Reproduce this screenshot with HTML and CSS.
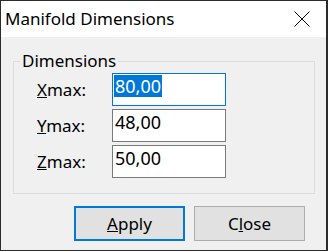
FILE: index.html
```html
<html lang="en">
<head>
    <link rel="stylesheet" href="styles.css">
</head>
<body>
    <div class='dialog'>
        <div class='titlebar'>
            <span class='title'>Manifold Dimensions</span>
            <svg class='close-x' width="16" height="16" viewBox="0 0 16 16">
                <path d="M0.5 0.5 L15.5 15.5 M15.5 0.5 L0.5 15.5" stroke="#000" stroke-width="1" fill="none" />
            </svg>
        </div>
        <fieldset class='group'>
            <legend>Dimensions</legend>
            <div class='rows'>
                <div class='row'>
                    <label><u>X</u>max:</label>
                    <div class='edit focused'><span class='sel'>80,00</span></div>
                </div>
                <div class='row'>
                    <label><u>Y</u>max:</label>
                    <div class='edit'>48,00</div>
                </div>
                <div class='row'>
                    <label><u>Z</u>max:</label>
                    <div class='edit'>50,00</div>
                </div>
            </div>
        </fieldset>
        <div class='buttons'>
            <button class='btn default'><u>A</u>pply</button>
            <button class='btn'>C<u>l</u>ose</button>
        </div>
    </div>
</body>
</html>
```

FILE: styles.css
```css
body {
    margin: 0;
    font-family: "Segoe UI", "Noto Sans", sans-serif;
    font-size: 17px;
    color: #000;
}
.dialog {
    width: 328px;
    height: 251px;
    box-sizing: border-box;
    border: 1px solid #2b2b2b;
    border-right-width: 2px;
    background-color: #f0f0f0;
    display: flex;
    flex-direction: column;
}
.titlebar {
    height: 36px;
    background-color: #fff;
    display: flex;
    align-items: center;
    justify-content: space-between;
    padding: 0 16px 0 4px;
}
.title {
    line-height: 20px;
}
.close-x {
    display: block;
}
.group {
    margin: 14px 11px 0 12px;
    padding: 0 6px 15px 6px;
    border: 1px solid #dcdcdc;
    min-width: 0;
}
.group legend {
    padding: 0 2px;
    line-height: 20px;
}
.rows {
    margin-top: 2px;
    padding-left: 17px;
    display: flex;
    flex-direction: column;
    gap: 3px;
}
.row {
    display: flex;
    align-items: center;
}
.row label {
    width: 75px;
}
.edit {
    width: 114px;
    height: 33px;
    box-sizing: border-box;
    border: 1px solid #7a7a7a;
    background-color: #fff;
    padding: 1px 2px;
    line-height: 22px;
    font-size: 18px;
}
.edit.focused {
    border-color: #0078d7;
    padding-left: 1px;
}
.sel {
    display: inline-block;
    background-color: #0078d7;
    color: #fff;
    padding: 0 1px;
}
.buttons {
    display: flex;
    justify-content: flex-end;
    gap: 9px;
    margin-top: 12px;
    padding-right: 21px;
}
.btn {
    width: 111px;
    height: 35px;
    border: 1px solid #adadad;
    background-color: #e1e1e1;
    font-family: inherit;
    font-size: 17px;
    color: #000;
    padding: 0;
}
.btn.default {
    border: 2px solid #0078d7;
}
```
